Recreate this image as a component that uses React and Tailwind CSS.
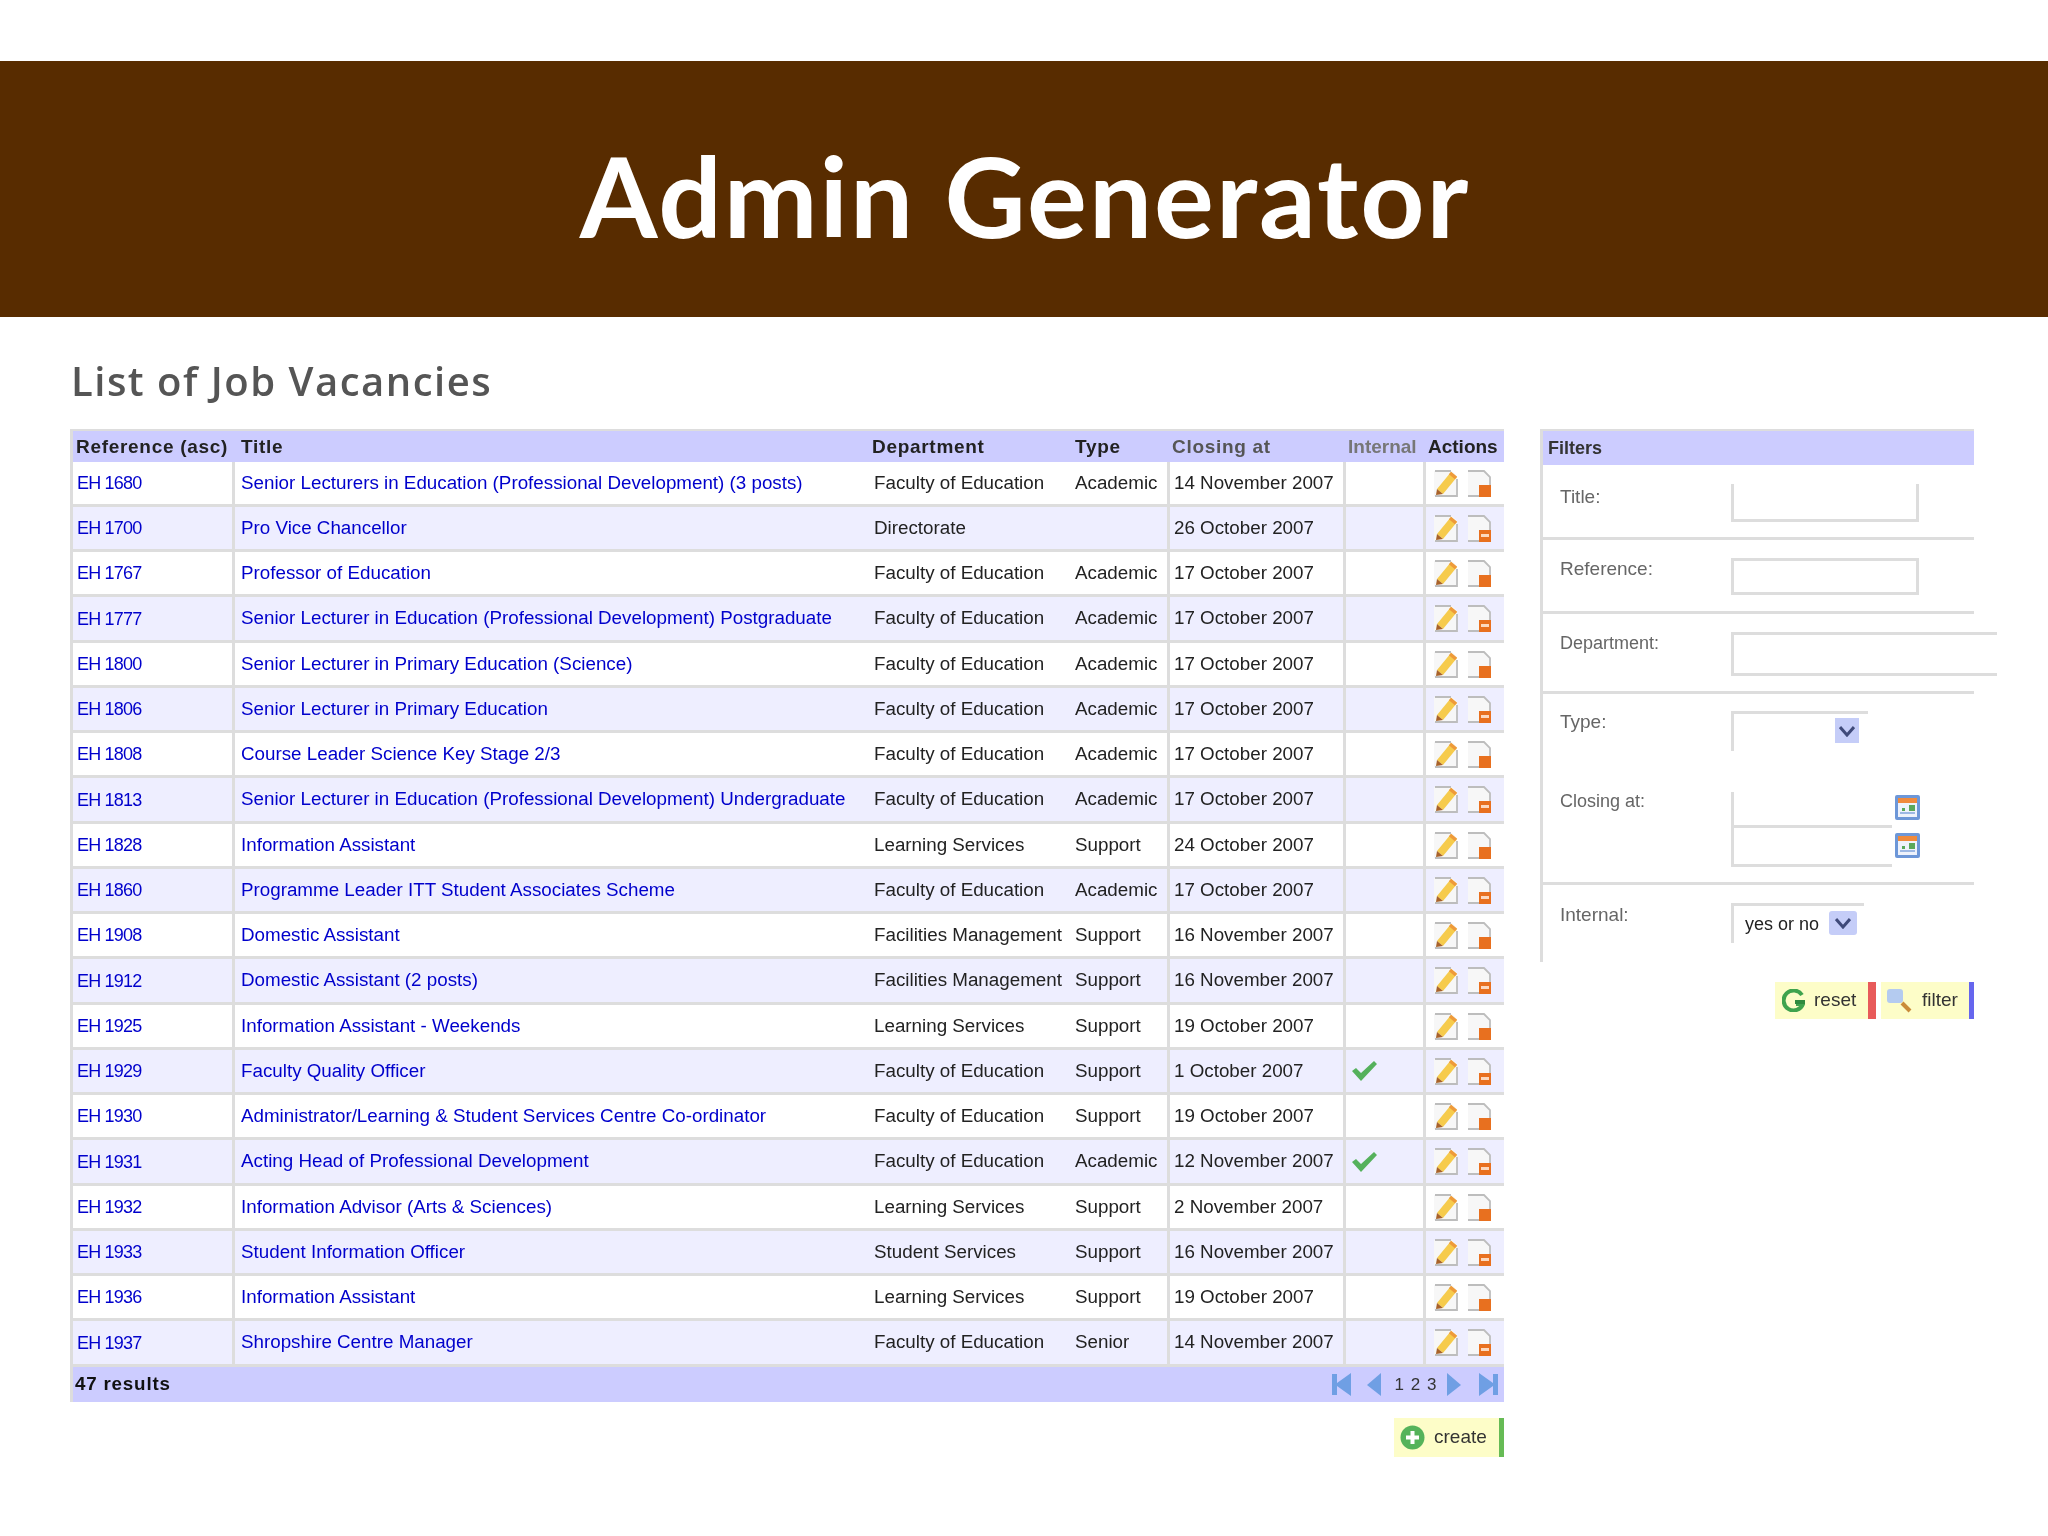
import React from "react";

const rows = [
  ["EH 1680", "Senior Lecturers in Education (Professional Development) (3 posts)", "Faculty of Education", "Academic", "14 November 2007", false],
  ["EH 1700", "Pro Vice Chancellor", "Directorate", "", "26 October 2007", false],
  ["EH 1767", "Professor of Education", "Faculty of Education", "Academic", "17 October 2007", false],
  ["EH 1777", "Senior Lecturer in Education (Professional Development) Postgraduate", "Faculty of Education", "Academic", "17 October 2007", false],
  ["EH 1800", "Senior Lecturer in Primary Education (Science)", "Faculty of Education", "Academic", "17 October 2007", false],
  ["EH 1806", "Senior Lecturer in Primary Education", "Faculty of Education", "Academic", "17 October 2007", false],
  ["EH 1808", "Course Leader Science Key Stage 2/3", "Faculty of Education", "Academic", "17 October 2007", false],
  ["EH 1813", "Senior Lecturer in Education (Professional Development) Undergraduate", "Faculty of Education", "Academic", "17 October 2007", false],
  ["EH 1828", "Information Assistant", "Learning Services", "Support", "24 October 2007", false],
  ["EH 1860", "Programme Leader ITT Student Associates Scheme", "Faculty of Education", "Academic", "17 October 2007", false],
  ["EH 1908", "Domestic Assistant", "Facilities Management", "Support", "16 November 2007", false],
  ["EH 1912", "Domestic Assistant (2 posts)", "Facilities Management", "Support", "16 November 2007", false],
  ["EH 1925", "Information Assistant - Weekends", "Learning Services", "Support", "19 October 2007", false],
  ["EH 1929", "Faculty Quality Officer", "Faculty of Education", "Support", "1 October 2007", true],
  ["EH 1930", "Administrator/Learning & Student Services Centre Co-ordinator", "Faculty of Education", "Support", "19 October 2007", false],
  ["EH 1931", "Acting Head of Professional Development", "Faculty of Education", "Academic", "12 November 2007", true],
  ["EH 1932", "Information Advisor (Arts & Sciences)", "Learning Services", "Support", "2 November 2007", false],
  ["EH 1933", "Student Information Officer", "Student Services", "Support", "16 November 2007", false],
  ["EH 1936", "Information Assistant", "Learning Services", "Support", "19 October 2007", false],
  ["EH 1937", "Shropshire Centre Manager", "Faculty of Education", "Senior", "14 November 2007", false],
];

const EditIcon = () => (
  <svg width="25" height="27" viewBox="0 0 25 27">
    <path d="M1 1H19L24 6V26H1Z" fill="#f7f7f7" />
    <path d="M2 1H18M24 9V26H2" fill="none" stroke="#bdbdbd" strokeWidth="1.8" />
    <path d="M4 19L18 2L24 7L10 24Z" fill="#f6cb4c" />
    <path d="M17 3L23 8" stroke="#ee9a3a" strokeWidth="3.5" />
    <path d="M4 19L10 24L3 25Z" fill="#a8622a" />
  </svg>
);

const DeleteIcon = ({ bar }) => (
  <svg width="26" height="27" viewBox="0 0 26 27">
    <path d="M2 1H18L24 7V26H2Z" fill="#f7f7f7" />
    <path d="M2 1H18L24 7V15M14 26H2" fill="none" stroke="#bdbdbd" strokeWidth="1.8" />
    <rect x="13" y="15" width="12" height="12" fill="#e8701f" />
    {bar && <rect x="15" y="19" width="8" height="3" fill="#fbd9c0" />}
  </svg>
);

const CheckIcon = () => (
  <svg width="27" height="22" viewBox="0 0 27 22">
    <path d="M1 11L5 8L10 13L23 1L26 4L10 21Z" fill="#55b15c" />
  </svg>
);

const PagerIcon = ({ d }) => (
  <svg width="20" height="23" viewBox="0 0 20 23">
    <path d={d} fill="#6f9fe4" />
  </svg>
);

const CalendarIcon = () => (
  <svg width="25" height="25" viewBox="0 0 25 25">
    <rect x="0" y="0" width="25" height="25" rx="2" fill="#6d97d8" />
    <rect x="3" y="3" width="19" height="5" fill="#f08a3c" />
    <rect x="3" y="8" width="19" height="14" fill="#eef2fb" />
    <rect x="14" y="10" width="6" height="6" fill="#5aa85a" />
    <rect x="7" y="13" width="3" height="3" fill="#5aa85a" />
    <rect x="5" y="17" width="15" height="2" fill="#9db8e4" />
  </svg>
);

const ArrowBox = ({ box }) => (
  <div className={box}>
    <svg width="16" height="12" viewBox="0 0 16 12">
      <path d="M1 2L8 10L15 2" fill="none" stroke="#3f4a7a" strokeWidth="3" />
    </svg>
  </div>
);

const App = () => {
  return (
    <div className="h-[1536px] w-[2048px] overflow-hidden bg-white pt-[61px] font-['Liberation_Sans',sans-serif]">
      <div className="flex h-[256px] items-center justify-center bg-[#582c00] pt-[12px] pl-[2px]">
        <h1 className="font-['Lato',sans-serif] text-[112px] leading-none font-bold tracking-[2px] text-white">
          Admin Generator
        </h1>
      </div>

      <h2 className="mt-[41px] ml-[71px] font-['Open_Sans',sans-serif] text-[40px] leading-[46px] font-semibold tracking-[1.5px] text-[#555555] blur-[0.4px]">
        List of Job Vacancies
      </h2>

      <div className="mt-[25px] ml-[70px] flex items-start blur-[0.7px]">
        <div className="w-[1434px]">
          <table className="w-full table-fixed border-separate border-spacing-0 text-[18.8px] leading-none text-[#222222]">
            <colgroup>
              <col className="w-[165px]" />
              <col className="w-[633px]" />
              <col className="w-[202px]" />
              <col className="w-[100px]" />
              <col className="w-[176px]" />
              <col className="w-[80px]" />
              <col className="w-[78px]" />
            </colgroup>
            <thead>
              <tr className="h-[33px] bg-[#ccccff] text-left text-[19px] font-bold tracking-[0.7px]">
                <th className="border-t-[2px] border-l-[3px] border-[#dddddd] pl-[3px] font-bold whitespace-nowrap">Reference (asc)</th>
                <th className="border-t-[2px] border-[#dddddd] pl-[6px] font-bold">Title</th>
                <th className="border-t-[2px] border-[#dddddd] pl-[4px] font-bold">Department</th>
                <th className="border-t-[2px] border-[#dddddd] pl-[5px] font-bold">Type</th>
                <th className="border-t-[2px] border-[#dddddd] pl-[2px] font-bold text-[#555555]">Closing at</th>
                <th className="border-t-[2px] border-[#dddddd] pl-[2px] font-bold tracking-normal text-[#777777]">Internal</th>
                <th className="border-t-[2px] border-[#dddddd] pl-[2px] font-bold tracking-normal">Actions</th>
              </tr>
            </thead>
            <tbody>
              {rows.map((r, i) => (
                <tr key={r[0]} className={(i % 4 === 3 ? "h-[46px] " : "h-[45px] ") + (i % 2 === 0 ? "bg-white" : "bg-[#eeeeff]")}>
                  <td className="border-r-[3px] border-b-[3px] border-l-[3px] border-[#dddddd] pl-[4px] text-[18px] tracking-[-0.8px] text-[#0000cc]">{r[0]}</td>
                  <td className="border-b-[3px] border-[#dddddd] pl-[6px] whitespace-nowrap text-[#0000cc]">{r[1]}</td>
                  <td className="border-b-[3px] border-[#dddddd] pl-[6px] whitespace-nowrap">{r[2]}</td>
                  <td className="border-r-[3px] border-b-[3px] border-[#dddddd] pl-[5px]">{r[3]}</td>
                  <td className="border-r-[3px] border-b-[3px] border-[#dddddd] pl-[4px] whitespace-nowrap">{r[4]}</td>
                  <td className="border-r-[3px] border-b-[3px] border-[#dddddd] pl-[5px]">{r[5] && <CheckIcon />}</td>
                  <td className="border-b-[3px] border-[#dddddd] pl-[7px]">
                    <div className="flex items-center gap-[8px]">
                      <EditIcon />
                      <DeleteIcon bar={i % 2 === 1} />
                    </div>
                  </td>
                </tr>
              ))}
              <tr className="h-[35px] bg-[#ccccff]">
                <td colSpan={7} className="border-l-[3px] border-[#dddddd] pl-[2px]">
                  <div className="flex items-center justify-between pr-[5px]">
                    <span className="font-bold tracking-[0.8px] text-[#111111]">47 results</span>
                    <div className="flex items-center">
                      <PagerIcon d="M0 1H5V10L19 0V23L5 13V22H0Z" />
                      <div className="ml-[15px]">
                        <PagerIcon d="M14 0V23L0 12Z" />
                      </div>
                      <span className="w-[58px] text-center text-[17px] tracking-[1px] text-[#333333]">1 2 3</span>
                      <PagerIcon d="M2 0L16 12L2 23Z" />
                      <div className="ml-[14px]">
                        <PagerIcon d="M0 0L14 10V1H19V22H14V13L0 23Z" />
                      </div>
                    </div>
                  </div>
                </td>
              </tr>
            </tbody>
          </table>

          <div className="mt-[16px] flex justify-end">
            <button className="flex h-[39px] w-[110px] items-center gap-[9px] border-r-[5px] border-[#66bb55] bg-[#fdfdc8] pl-[6px] text-[19px] text-[#333333]">
              <svg width="25" height="25" viewBox="0 0 25 25">
                <circle cx="12.5" cy="12.5" r="12" fill="#55b35a" />
                <path d="M12.5 6V19M6 12.5H19" stroke="#ffffff" strokeWidth="4" />
              </svg>
              create
            </button>
          </div>
        </div>

        <div className="ml-[36px] w-[434px] text-[19px] text-[#666666]">
          <div className="border-l-[3px] border-[#dddddd]">
            <div className="flex h-[36px] items-center border-t-[2px] border-[#dddddd] bg-[#ccccff] pl-[5px] text-[18px] font-bold text-[#333333]">
              Filters
            </div>
            <div className="flex h-[75px] border-b-[3px] border-[#dddddd] pt-[19px]">
              <label className="-mt-[1px] w-[188px] shrink-0 pl-[17px]">Title:</label>
              <input className="h-[38px] w-[188px] shrink-0 border-x-[3px] border-b-[3px] border-[#dddddd]" />
            </div>
            <div className="flex h-[74px] border-b-[3px] border-[#dddddd] pt-[18px]">
              <label className="-mt-[3px] w-[188px] shrink-0 pl-[17px]">Reference:</label>
              <input className="h-[37px] w-[188px] shrink-0 border-[3px] border-[#dddddd]" />
            </div>
            <div className="flex h-[80px] border-b-[3px] border-[#dddddd] pt-[18px]">
              <label className="-mt-[2px] w-[188px] shrink-0 pl-[17px] text-[18px]">Department:</label>
              <input className="h-[44px] w-[266px] shrink-0 border-y-[3px] border-l-[3px] border-[#dddddd]" />
            </div>
            <div className="flex h-[191px] flex-col border-b-[3px] border-[#dddddd]">
              <div className="flex pt-[17px]">
                <label className="-mt-[3px] w-[188px] shrink-0 pl-[17px]">Type:</label>
                <div className="relative h-[40px] w-[137px] border-t-[3px] border-l-[3px] border-[#dddddd]">
                  <ArrowBox box="absolute top-[4px] left-[101px] flex h-[25px] w-[24px] items-center justify-center bg-[#c5cdf8]" />
                </div>
              </div>
              <div className="mt-[41px] flex">
                <label className="-mt-[4px] w-[188px] shrink-0 pl-[17px] text-[18px]">Closing at:</label>
                <div>
                  <div className="flex h-[36px] items-start">
                    <div className="h-[36px] w-[161px] shrink-0 border-b-[3px] border-l-[3px] border-[#dddddd]" />
                    <div className="mt-[3px] ml-[3px] shrink-0">
                      <CalendarIcon />
                    </div>
                  </div>
                  <div className="flex h-[39px] items-start">
                    <div className="h-[39px] w-[161px] shrink-0 border-b-[3px] border-l-[3px] border-[#dddddd]" />
                    <div className="mt-[5px] ml-[3px] shrink-0">
                      <CalendarIcon />
                    </div>
                  </div>
                </div>
              </div>
            </div>
            <div className="flex h-[77px] pt-[18px]">
              <label className="-mt-[2px] w-[188px] shrink-0 pl-[17px]">Internal:</label>
              <div className="relative flex h-[40px] w-[133px] items-center border-t-[3px] border-l-[3px] border-[#dddddd] pl-[11px] text-[18px] text-[#222222]">
                yes or no
                <ArrowBox box="absolute top-[5px] left-[95px] flex h-[24px] w-[28px] items-center justify-center rounded-[3px] bg-[#c5cdf8]" />
              </div>
            </div>
          </div>

          <div className="mt-[20px] flex justify-end gap-[5px] text-[#333333]">
            <button className="flex h-[37px] w-[101px] items-center gap-[9px] border-r-[8px] border-[#e85a5a] bg-[#fdfdc8] pl-[7px]">
              <svg width="23" height="23" viewBox="0 0 23 23">
                <path d="M20 6A10 10 0 1 0 21 15H14" fill="none" stroke="#3fa34d" strokeWidth="4" />
                <path d="M13 11H23V15H13Z" fill="#2f8a3f" />
              </svg>
              reset
            </button>
            <button className="flex h-[37px] w-[93px] items-center gap-[10px] border-r-[5px] border-[#6666ee] bg-[#fdfdc8] pl-[6px]">
              <svg width="25" height="25" viewBox="0 0 25 25">
                <rect x="0" y="1" width="16" height="14" rx="3" fill="#b4cbf0" />
                <path d="M15 15L23 23" stroke="#c98b3a" strokeWidth="4" />
              </svg>
              filter
            </button>
          </div>
        </div>
      </div>
    </div>
  );
};

export default App;
